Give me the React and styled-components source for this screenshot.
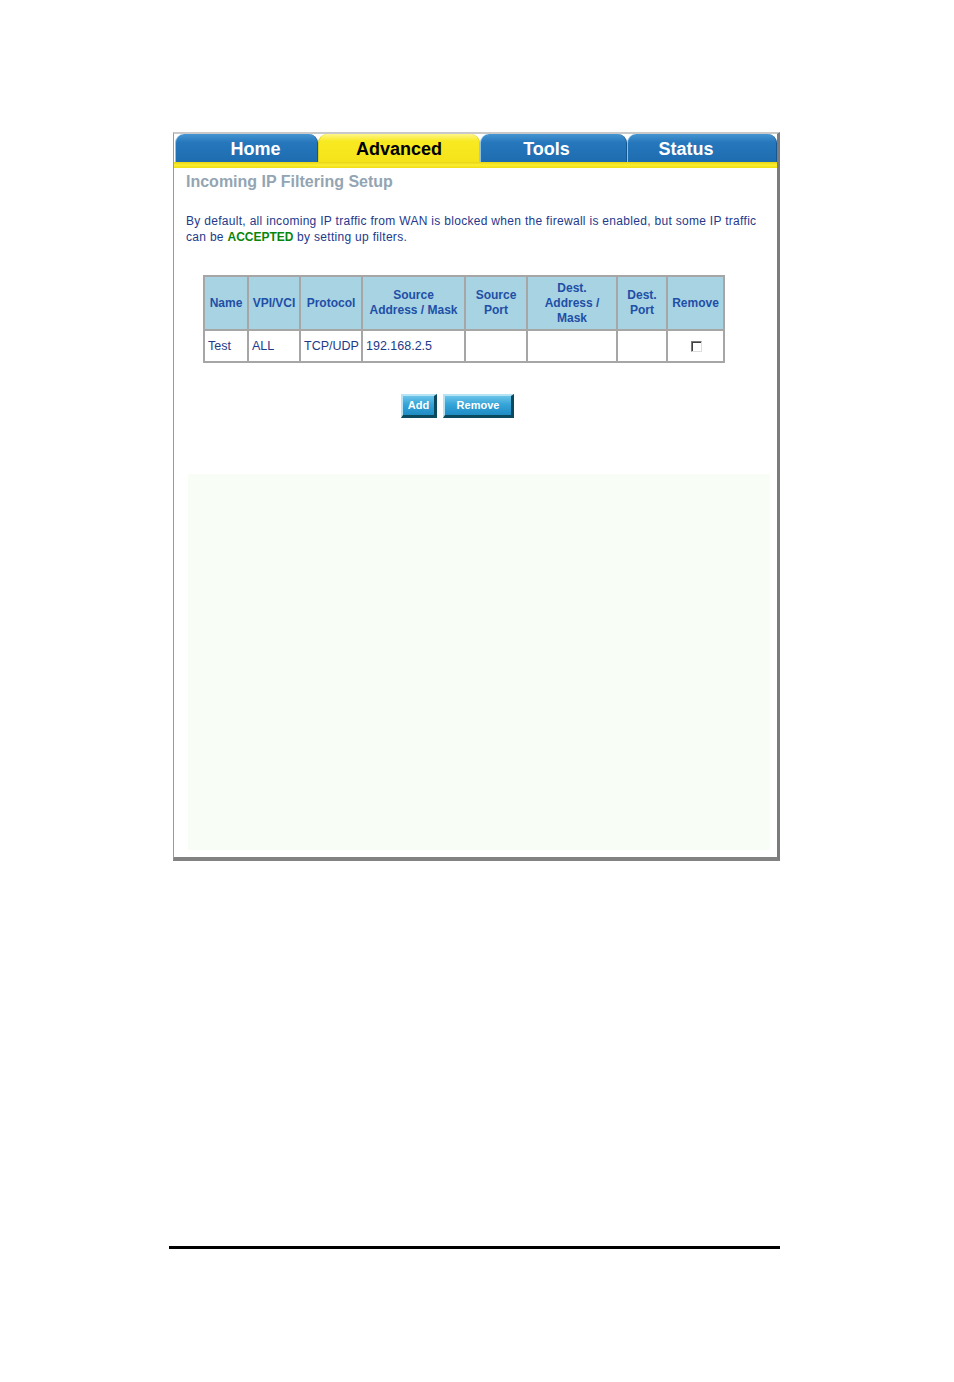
import React from 'react';
import styled, { createGlobalStyle } from 'styled-components';

const GlobalStyle = createGlobalStyle`
  html, body {
    margin: 0;
    padding: 0;
    background: #ffffff;
    font-family: "Liberation Sans", Arial, sans-serif;
  }
`;

const Page = styled.div`
  width: 954px;
  height: 1382px;
  padding: 132px 0 0 173px;
  box-sizing: border-box;
`;

const Frame = styled.div`
  width: 607px;
  height: 729px;
  box-sizing: border-box;
  border-top: 2px solid #c9c9c9;
  border-left: 1px solid #9a9a9a;
  border-right: 3px solid #7c7c7c;
  border-bottom: 4px solid #828282;
  background: #ffffff;
  display: flex;
  flex-direction: column;
`;

const TabBar = styled.div`
  display: flex;
  height: 28px;
  padding-left: 1px;
`;

// $shift moves the label off the tab's centre, as on the original tab images
const Tab = styled.div`
  width: ${p => p.$w}px;
  box-sizing: border-box;
  display: flex;
  align-items: center;
  justify-content: center;
  padding: 2px ${p => Math.max(0, -p.$shift * 2)}px 0 ${p => Math.max(0, p.$shift * 2)}px;
  font-size: 18px;
  font-weight: bold;
  color: ${p => (p.$active ? '#000000' : '#ffffff')};
  background: ${p =>
    p.$active
      ? 'linear-gradient(#fff58a 0%, #f8ea22 25%, #f5e31a 100%)'
      : 'linear-gradient(#4595d2 0%, #2677bc 30%, #1e6cb0 100%)'};
  border-radius: 9px 9px 0 0;
  border-left: 1px solid ${p => (p.$active ? '#e0cf10' : '#8ec0e6')};
  border-right: 1px solid ${p => (p.$active ? '#e0cf10' : '#17578f')};
`;

const YellowRule = styled.div`
  height: 6px;
  background: linear-gradient(#e7d311 0%, #fbee32 50%, #efdc15 100%);
`;

const Body = styled.div`
  flex: 1;
  display: flex;
  flex-direction: column;
  padding: 4px 7px 7px 12px;
`;

const Title = styled.h1`
  margin: 0;
  font-size: 16px;
  line-height: 19px;
  font-weight: bold;
  color: #93a5b3;
`;

const Intro = styled.p`
  margin: 23px 0 0;
  font-size: 12px;
  line-height: 15.5px;
  letter-spacing: 0.3px;
  color: #23398c;
`;

const Accepted = styled.b`
  color: #0a860a;
  letter-spacing: 0;
`;

const Table = styled.table`
  margin: 30px 0 0 17px;
  width: 520px;
  border-collapse: collapse;
  table-layout: fixed;
  border: 2px solid #a6a6a6;
`;

const HeadCell = styled.th`
  box-sizing: border-box;
  width: ${p => p.$w}px;
  height: 54px;
  padding: 0 1px;
  background: #a7d3e3;
  border: 2px solid #a6a6a6;
  font-size: 12px;
  line-height: 15px;
  font-weight: bold;
  color: #1f4fa6;
  text-align: center;
`;

const Cell = styled.td`
  height: 30px;
  padding: 0 3px;
  border: 2px solid #a6a6a6;
  font-size: 12.5px;
  color: #1e3a88;
  text-align: ${p => (p.$center ? 'center' : 'left')};
  white-space: nowrap;
`;

const Check = styled.span`
  display: inline-block;
  vertical-align: middle;
  width: 9px;
  height: 9px;
  background: #ffffff;
  border-top: 1px solid #7a7a7a;
  border-left: 1px solid #7a7a7a;
  border-right: 1px solid #dcdcdc;
  border-bottom: 1px solid #dcdcdc;
  box-shadow: inset 1px 1px 0 #404040;
  margin-left: 2px;
`;

const ButtonRow = styled.div`
  display: flex;
  gap: 6px;
  margin: 31px 0 0 215px;
`;

const Button = styled.button`
  width: ${p => p.$w}px;
  height: 24px;
  box-sizing: border-box;
  padding: 0 0 1px;
  font-family: "Liberation Sans", Arial, sans-serif;
  font-size: 11px;
  font-weight: bold;
  color: #ffffff;
  background: linear-gradient(#6cc4e8 0%, #35a4d8 45%, #1f8cc4 100%);
  border-style: solid;
  border-width: 2px 3px 3px 2px;
  border-color: #b6e4f4 #0b4a5e #0b4a5e #b6e4f4;
  cursor: pointer;
`;

const Tint = styled.div`
  flex: 1;
  margin: 56px 0 0 2px;
  background: #f8fdf6;
`;

const FooterRule = styled.div`
  width: 611px;
  height: 3px;
  margin: 385px 0 0 -4px;
  background: #000000;
`;

const tabs = [
  { label: 'Home', w: 143, shift: 9 },
  { label: 'Advanced', w: 162, shift: 0, active: true },
  { label: 'Tools', w: 147, shift: -7 },
  { label: 'Status', w: 150, shift: -16 },
];

const columns = [
  { label: 'Name', w: 44 },
  { label: 'VPI/VCI', w: 52 },
  { label: 'Protocol', w: 62 },
  { label: <>Source<br />Address / Mask</>, w: 103 },
  { label: <>Source<br />Port</>, w: 62 },
  { label: <>Dest.<br />Address /<br />Mask</>, w: 90 },
  { label: <>Dest.<br />Port</>, w: 50 },
  { label: 'Remove', w: 57 },
];

const rules = [
  { name: 'Test', vc: 'ALL', proto: 'TCP/UDP', src: '192.168.2.5', srcPort: '', dst: '', dstPort: '' },
];

export default function App() {
  return (
    <>
      <GlobalStyle />
      <Page>
        <Frame>
          <TabBar>
            {tabs.map(t => (
              <Tab key={t.label} $w={t.w} $shift={t.shift} $active={t.active}>{t.label}</Tab>
            ))}
          </TabBar>
          <YellowRule />
          <Body>
            <Title>Incoming IP Filtering Setup</Title>
            <Intro>
              By default, all incoming IP traffic from WAN is blocked when the firewall is enabled, but some IP traffic
              <br />
              can be <Accepted>ACCEPTED</Accepted> by setting up filters.
            </Intro>
            <Table>
              <thead>
                <tr>
                  {columns.map((c, i) => (
                    <HeadCell key={i} $w={c.w}>{c.label}</HeadCell>
                  ))}
                </tr>
              </thead>
              <tbody>
                {rules.map(r => (
                  <tr key={r.name}>
                    <Cell>{r.name}</Cell>
                    <Cell>{r.vc}</Cell>
                    <Cell>{r.proto}</Cell>
                    <Cell>{r.src}</Cell>
                    <Cell>{r.srcPort}</Cell>
                    <Cell>{r.dst}</Cell>
                    <Cell>{r.dstPort}</Cell>
                    <Cell $center><Check /></Cell>
                  </tr>
                ))}
              </tbody>
            </Table>
            <ButtonRow>
              <Button $w={36}>Add</Button>
              <Button $w={71}>Remove</Button>
            </ButtonRow>
            <Tint />
          </Body>
        </Frame>
        <FooterRule />
      </Page>
    </>
  );
}
